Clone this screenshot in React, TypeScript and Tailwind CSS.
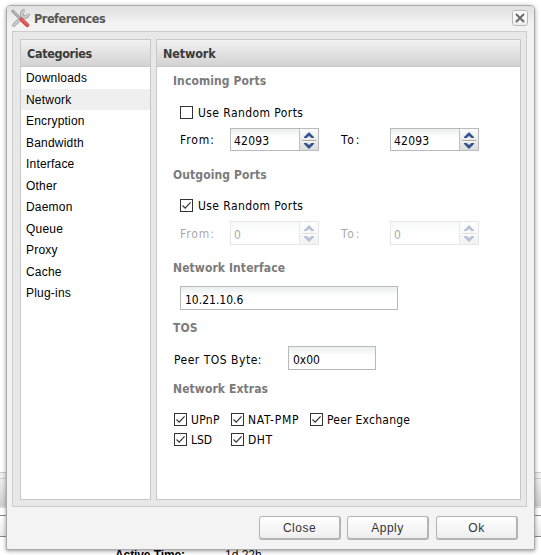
import React from 'react';
import clsx from 'clsx';

const CATEGORIES = [
    'Downloads',
    'Network',
    'Encryption',
    'Bandwidth',
    'Interface',
    'Other',
    'Daemon',
    'Queue',
    'Proxy',
    'Cache',
    'Plug-ins',
];

const ToolsIcon: React.FC = () => (
    <svg width="19" height="19" viewBox="0 0 19 19" fill="none" strokeLinecap="round">
        <path d="M3 16 12 7" stroke="#a0a0a0" strokeWidth="3.8"/>
        <path d="M3 16 12 7" stroke="#cfcfcf" strokeWidth="2.2"/>
        <path d="M17.2 4.8A3.3 3.3 0 1 1 13.6 1.6" stroke="#a0a0a0" strokeWidth="3.4" strokeLinecap="butt"/>
        <path d="M16.8 4.8A3.1 3.1 0 1 1 13.7 2" stroke="#cbcbcb" strokeWidth="2" strokeLinecap="butt"/>
        <path d="M2 2.2 9.5 9.7" stroke="#8f8f8f" strokeWidth="3"/>
        <path d="M2.2 2.2 9 9" stroke="#bdbdbd" strokeWidth="1.4"/>
        <path d="M10.5 10.5 16.2 16.2" stroke="#d24a4a" strokeWidth="4"/>
        <path d="M10.8 10.2 16.2 15.6" stroke="#ea7068" strokeWidth="1.3"/>
    </svg>
);

const Check: React.FC<{ label: string; checked?: boolean; className?: string }> = ({label, checked, className}) => (
    <label className={clsx('flex h-[13px] items-center', className)}>
        <span className="h-[13px] w-[13px] shrink-0 border border-[#333] bg-white">
            {checked && (
                <svg width="11" height="11" viewBox="0 0 11 11" fill="none" stroke="#333" strokeWidth="1.2">
                    <path d="M1.5 5.5 4.2 8.2 9.6 2.4"/>
                </svg>
            )}
        </span>
        <span className="whitespace-nowrap pl-1">{label}</span>
    </label>
);

const Spinner: React.FC<{ value: string; tall?: boolean }> = ({value, tall}) => (
    <span className={clsx('flex w-[89px] border border-[#b9b9c0] bg-white', tall ? 'h-6' : 'h-[23px]')}>
        <span className="flex w-[68px] items-center bg-gradient-to-b from-[#e9eeee] to-white to-40% pt-[3px] pl-[3px] tracking-[0.2px]">
            {value}
        </span>
        <span className="flex flex-1 flex-col items-center justify-center border-l border-[#c0c0c8] bg-gradient-to-b from-[#fcfcfc] to-[#dcdcdc]">
            <svg width="14" height="20" viewBox="0 0 14 20">
                <path d="M7 2 12 7V8H9.5L7 6 4.5 8H2V7Z" fill="#34548f"/>
                <path d="M0 10.5H14" stroke="#aaa899"/>
                <path d="M0 11.5H14" stroke="#fff"/>
                <path d="M7 19 2 14V13H4.5L7 15 9.5 13H12V14Z" fill="#34548f"/>
            </svg>
        </span>
    </span>
);

const PortRange: React.FC<{ value: string; disabled?: boolean }> = ({value, disabled}) => (
    <div className={clsx('flex items-center pl-[23px]', disabled && 'opacity-35')}>
        <span className="w-[50px] pt-px tracking-[0.9px]">From:</span>
        <Spinner value={value} tall={disabled}/>
        <span className="ml-[22px] w-[49px] pt-px tracking-[1.8px]">To:</span>
        <Spinner value={value} tall={disabled}/>
    </div>
);

const TextField: React.FC<{ value: string; className: string }> = ({value, className}) => (
    <span
        className={clsx('flex h-6 items-center border border-[#b9b9b9] bg-gradient-to-b from-[#e9eeee] to-white to-40% pt-[4px] pl-1', className)}>
        {value}
    </span>
);

const Title: React.FC<{ className: string; children: React.ReactNode }> = ({className, children}) => (
    <h3 className={clsx('h-5 pl-4 font-bold leading-5 tracking-[0.1px] text-[#7b7b7b]', className)}>{children}</h3>
);

const PanelHeader: React.FC<{ children: React.ReactNode }> = ({children}) => (
    <h2 className="h-[27px] border-b border-[#c8c8c8] bg-gradient-to-b from-[#f2f2f2] to-[#d2d2d2] pl-1.5 text-[12.5px] font-bold leading-[27px] text-[#3a3a3a]">
        {children}
    </h2>
);

const DialogButton: React.FC<{ children: React.ReactNode; className?: string }> = ({children, className}) => (
    <button
        className={clsx("h-6 w-[82px] rounded-[3px] border border-r-2 border-b-2 border-[#b4b4b4] bg-gradient-to-b from-white to-[#eee] font-['Liberation_Sans',sans-serif] text-[12px] leading-5 tracking-[0.5px] text-[#333]", className)}>
        {children}
    </button>
);

const NetworkPage: React.FC = () => (
    <div className="flex flex-col">
        <Title className="mt-1">Incoming Ports</Title>
        <Check className="mt-[15px] pl-[23px] tracking-[0.42px] [&>span:last-child]:pl-[5px]" label="Use Random Ports"/>
        <div className="mt-[9px]"><PortRange value="42093"/></div>
        <Title className="mt-[14px]">Outgoing Ports</Title>
        <Check className="mt-[14px] pl-[23px] tracking-[0.42px] [&>span:last-child]:pl-[5px]" label="Use Random Ports" checked/>
        <div className="mt-[9px]"><PortRange value="0" disabled/></div>
        <Title className="mt-[13px]">Network Interface</Title>
        <TextField className="mt-2 ml-[23px] w-[218px]" value="10.21.10.6"/>
        <Title className="mt-2">TOS</Title>
        <div className="mt-2 flex items-center pl-[17px]">
            <span className="w-[114px] pt-1 tracking-[0.5px]">Peer TOS Byte:</span>
            <TextField className="w-[88px]" value="0x00"/>
        </div>
        <Title className="mt-[9px]">Network Extras</Title>
        <div className="mt-[14px] grid grid-cols-[57px_79px_120px] gap-y-[7px] pl-[17px]">
            <Check label="UPnP" className="tracking-[0.3px]" checked/>
            <Check label="NAT-PMP" className="tracking-[0.7px]" checked/>
            <Check label="Peer Exchange" className="tracking-[0.25px]" checked/>
            <Check label="LSD" checked/>
            <Check label="DHT" className="tracking-[0.5px]" checked/>
        </div>
    </div>
);

export default function App() {
    return (
        <div
            className="relative flex h-[555px] w-[541px] flex-col overflow-hidden bg-white pt-[472px] font-['DejaVu_Sans_Condensed','DejaVu_Sans',sans-serif] text-[12px] text-black">
            {/* Main window behind the dialog */}
            <div className="h-1.5 shrink-0 border-t border-[#ccc] bg-[#f0f0f0]"/>
            <div className="h-7 shrink-0 border-y border-[#ccc] bg-gradient-to-b from-[#eee] to-[#d0d0d0]"/>
            <div className="h-[9px] shrink-0 border-t-2 border-[#ddd] bg-white"/>
            <div className="h-[22px] shrink-0 border-y border-[#888] bg-gradient-to-b from-white to-[#eaeaea]"/>
            <div className="mt-[10px] flex shrink-0 pl-[115px] font-['Liberation_Sans',sans-serif] text-[12px] leading-4">
                <span className="w-[110px] font-bold tracking-[-0.1px]">Active Time:</span>
                <span>1d 22h</span>
            </div>

            <div
                className="absolute top-[5px] left-[6px] flex h-[545px] w-[529px] flex-col rounded-t-[5px] border border-[#aaa] bg-[#f3f3f3] px-[5px] shadow-[0_1px_4px_rgba(0,0,0,0.4)]">
                <div className="-mx-[5px] flex h-[25px] shrink-0 items-center rounded-t-[4px] bg-gradient-to-b from-[#e0e0e0] to-[#f3f3f3] to-70% pr-[6px] pl-1">
                    <ToolsIcon/>
                    <span className="ml-1 flex-1 pt-px text-[12.5px] font-bold tracking-[-0.45px] text-[#555]">Preferences</span>
                    <button
                        className="-mt-px flex h-4 w-4 items-center justify-center rounded-[3px] border border-[#bbb] bg-gradient-to-b from-white to-[#eee]">
                        <svg width="10" height="10" viewBox="0 0 10 10" stroke="#6c6c6c" strokeWidth="2">
                            <path d="M1 1 9 9M9 1 1 9"/>
                        </svg>
                    </button>
                </div>

                <div className="flex h-[476px] w-[515px] shrink-0 gap-[5px] border border-[#ccc] bg-[#e8e8e8] px-[7px] pt-[7px] pb-[6px] pr-[5px]">
                    <div className="h-[461px] w-[131px] border border-[#c8c8c8] bg-white">
                        <PanelHeader><span className="tracking-[-0.35px]">Categories</span></PanelHeader>
                        <ul className="font-['Liberation_Sans',sans-serif] text-[12px] tracking-[0.2px]">
                            {CATEGORIES.map((name) => (
                                <li key={name}
                                    className={clsx('h-[21.5px] pl-[5px] leading-[22px]', name === 'Network' && 'bg-[#efefef]')}>
                                    {name}
                                </li>
                            ))}
                        </ul>
                    </div>
                    <div className="h-[461px] w-[365px] border border-[#c8c8c8] bg-white">
                        <PanelHeader><span className="tracking-[-0.15px]">Network</span></PanelHeader>
                        <NetworkPage/>
                    </div>
                </div>

                <div className="flex justify-end gap-[6px] pt-[9px] pr-[11px]">
                    <DialogButton>Close</DialogButton>
                    <DialogButton>Apply</DialogButton>
                    <DialogButton className="ml-px">Ok</DialogButton>
                </div>
            </div>
        </div>
    );
}
